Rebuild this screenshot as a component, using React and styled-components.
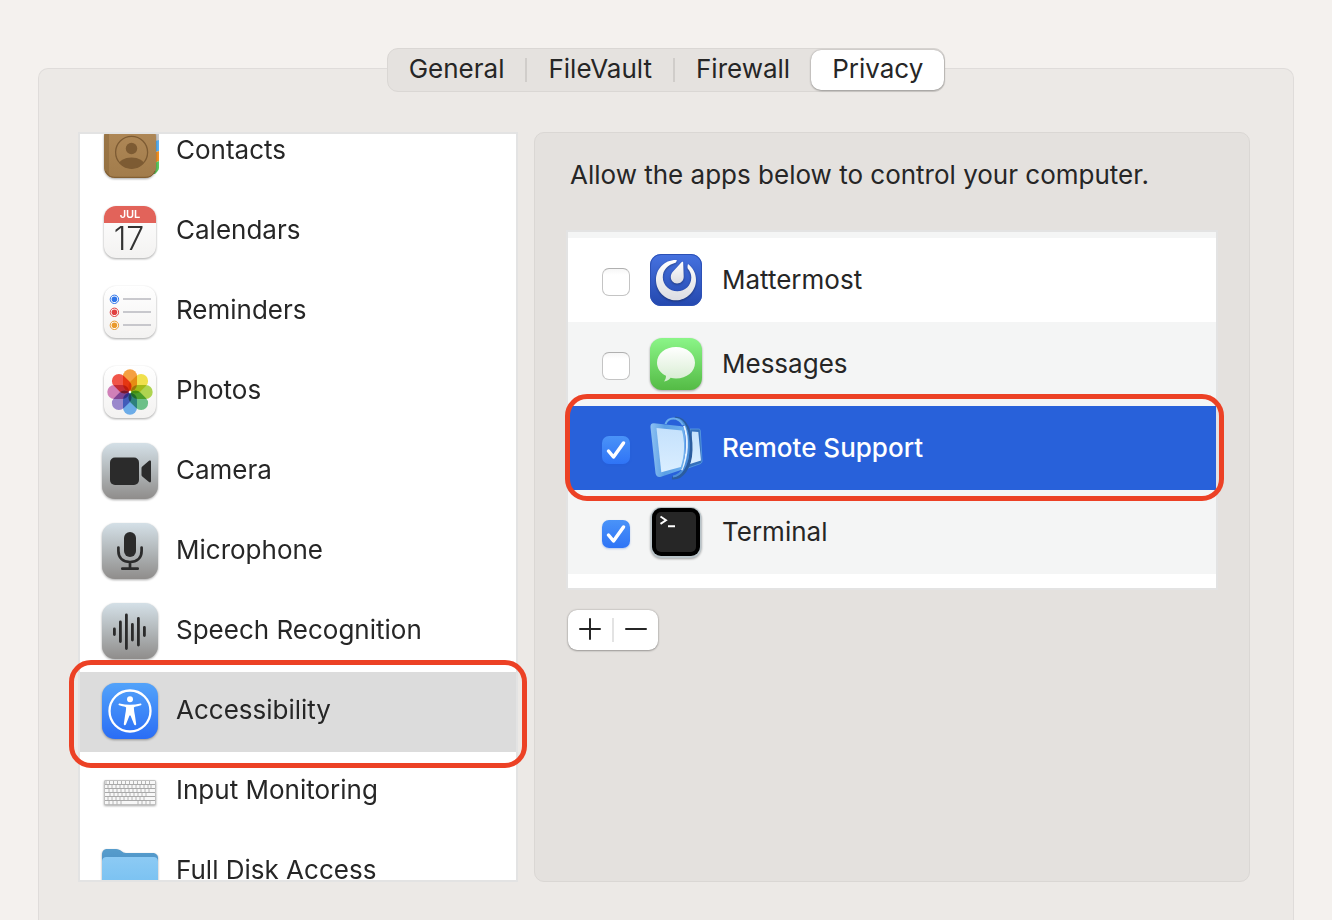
import React, { useLayoutEffect, useRef, useState } from "react";
import styled, { createGlobalStyle } from "styled-components";

const GlobalStyle = createGlobalStyle`
  *, *::before, *::after { box-sizing: border-box; }
  body {
    margin: 0;
    background: #f4f1ee;
    color: #262626;
    font-family: Inter, "Liberation Sans", sans-serif;
    font-size: 26px;
    line-height: 32px;
  }
  button, input { font: inherit; color: inherit; margin: 0; }
`;

const Page = styled.main`
  display: flex;
  flex-direction: column;
  min-height: 100vh;
  padding: 48px 38px 0;
`;

const TabBar = styled.div`
  display: flex;
  align-self: center;
  z-index: 1;
  height: 44px;
  margin-bottom: -24px;
  padding: 1px 0;
  border: 1px solid #dad7d4;
  border-radius: 11px;
  background: #e5e2df;
`;

const Tab = styled.button`
  display: flex;
  align-items: center;
  height: 40px;
  padding: 0 21px 2px;
  border: 0;
  border-radius: 10px;
  background: ${(p) => (p.$active ? "#ffffff" : "transparent")};
  box-shadow: ${(p) => (p.$active ? "0 0 2px rgba(0,0,0,.3), 0 1px 2px rgba(0,0,0,.25)" : "none")};
`;

const TabDivider = styled.span`
  align-self: center;
  width: 2px;
  height: 24px;
  background: #d0cdca;
`;

const Frame = styled.section`
  flex: 1;
  padding: 63px 43px 38px 39px;
  border: 1px solid #dfdcda;
  border-bottom: 0;
  border-radius: 10px 10px 0 0;
  background: #ece9e6;
`;

const Columns = styled.div`
  display: grid;
  grid-template-columns: minmax(300px, 440px) minmax(480px, 1fr);
  gap: 16px;
  height: calc(100vh - 170px);
  min-height: 640px;
`;

const Sidebar = styled.div`
  position: relative;
  min-height: 0;
`;

const CategoryList = styled.nav`
  height: 100%;
  overflow-y: auto;
  scrollbar-width: none;
  border: 2px solid #e3e3e3;
  background: #ffffff;
`;

const Category = styled.button`
  display: flex;
  align-items: center;
  gap: 18px;
  width: 100%;
  height: 80px;
  padding: 0 22px 2px;
  border: 0;
  background: ${(p) => (p.$active ? "#dcdcdc" : "transparent")};
  text-align: left;
`;

const CategoryLabel = styled.span`
  padding-bottom: 2px;
`;

const Ring = styled.span`
  position: absolute;
  z-index: 1;
  border: 5px solid #ec4125;
  border-radius: 22px;
  pointer-events: none;
`;

const CategoryRing = styled(Ring)`
  top: 528px;
  left: -9px;
  right: -9px;
  height: 108px;
`;

const AppRing = styled(Ring)`
  inset: -12px -8px -11px -3px;
`;

const Panel = styled.section`
  padding: 26px 31px;
  border: 1px solid #dad7d4;
  border-radius: 10px;
  background: #e4e1de;
`;

const Intro = styled.p`
  margin: 0 0 39px;
  padding-left: 4px;
`;

const AppList = styled.ul`
  margin: 0 0 20px;
  padding: 6px 0 14px;
  border: 2px solid #e3e3e3;
  background: linear-gradient(#f4f5f5 6px, #ffffff 6px);
  list-style: none;
`;

const AppRow = styled.li`
  position: relative;
  background: ${(p) => (p.$active ? "#2861da" : p.$shaded ? "#f4f5f5" : "#ffffff")};
  box-shadow: ${(p) => (p.$active ? "0 -12px #f4f5f5" : "none")};
  color: ${(p) => (p.$active ? "#ffffff" : "inherit")};
  font-weight: ${(p) => (p.$active ? 500 : 400)};
`;

const AppLabel = styled.label`
  display: flex;
  align-items: center;
  gap: 20px;
  height: 84px;
  padding: 0 34px;
`;

const CheckCell = styled.span`
  display: grid;
  padding-top: 4px;
  > * { grid-area: 1 / 1; }
`;

const CheckBox = styled.input`
  appearance: none;
  width: 28px;
  height: 28px;
  border: 1px solid #c4c4c4;
  border-top-color: #b0b0b0;
  border-radius: 7px;
  background: linear-gradient(#f6f6f6, #ffffff 6px);
  &:checked {
    border: 0;
    background: linear-gradient(#4a93f8, #2f74f6);
    box-shadow: 0 1px 2px rgba(30, 90, 220, 0.3);
  }
`;

const CheckMark = styled.svg`
  width: 28px;
  height: 28px;
  pointer-events: none;
`;

const AppIcon = styled.svg`
  position: relative;
  width: 52px;
  height: 52px;
  overflow: visible;
`;

const CategoryIcon = styled.svg`
  flex: none;
  width: 56px;
  height: 56px;
  overflow: visible;
`;

const AddRemove = styled.div`
  display: inline-flex;
  align-items: center;
  height: 40px;
  margin-left: 2px;
  border-radius: 9px;
  background: #ffffff;
  box-shadow: 0 0 2px rgba(0, 0, 0, 0.3), 0 1px 2px rgba(0, 0, 0, 0.25);
`;

const StepButton = styled.button`
  display: flex;
  align-items: center;
  justify-content: center;
  width: 44px;
  height: 40px;
  padding: 0 0 2px;
  border: 0;
  background: transparent;
`;

const StepDivider = styled.span`
  width: 2px;
  height: 24px;
  background: #e3e3e3;
`;

const Shaded = styled.g`
  filter: drop-shadow(0 1px 1px rgba(0, 0, 0, 0.35));
`;

const Petals = styled.g`
  isolation: isolate;
  rect { mix-blend-mode: multiply; }
`;

function Gradient({ id, from, to }) {
  return (
    <linearGradient id={id} x1="0" y1="0" x2="0" y2="1">
      <stop offset="0" stopColor={from} />
      <stop offset="1" stopColor={to} />
    </linearGradient>
  );
}

function Tile({ id, from, to }) {
  return (
    <Shaded>
      <defs><Gradient id={id} from={from} to={to} /></defs>
      <rect width="56" height="56" rx="13" fill={`url(#${id})`} />
    </Shaded>
  );
}

function WhiteTile({ id }) {
  return (
    <Shaded>
      <defs><Gradient id={id} from="#ffffff" to="#f3f2f1" /></defs>
      <rect x="2" y="3" width="52" height="52" rx="12" fill={`url(#${id})`} />
    </Shaded>
  );
}

function ContactsArt() {
  return (
    <>
      <defs>
        <Gradient id="book" from="#b08958" to="#a27c4b" />
        <clipPath id="badge"><circle cx="29.600" cy="29.300" r="16" /></clipPath>
      </defs>
      <rect x="44" y="6" width="13" height="15" rx="3" fill="#c9c9c9" />
      <path d="M50 19l7-2v11l-7 2Z" fill="#58aef0" />
      <path d="M50 30l7-2v10l-7 3Z" fill="#ef8f25" />
      <path d="M50 41l7-3v7c0 2-2 4-4 6h-3Z" fill="#5cc75e" />
      <Shaded><rect x="2" y="3" width="52" height="52" rx="11" fill="url(#book)" /></Shaded>
      <path d="M7 4v46c0 1.500.5 2.500 1.500 4C4 52 2 48 2 44V14C2 9 4 6 7 4Z" fill="#8b673b" opacity=".55" />
      <path d="M3.500 48c2 4.500 5 6.300 9.500 6.300h30c5 0 8-1.800 10-6.300" fill="none" stroke="#7c592e" strokeWidth="1" />
      <circle cx="29.600" cy="29.300" r="16" fill="none" stroke="#7d5b33" strokeWidth="1.300" />
      <circle cx="29.500" cy="25.500" r="5.700" fill="#7d5b33" />
      <ellipse cx="29.500" cy="42" rx="13" ry="7.500" fill="#7d5b33" clipPath="url(#badge)" />
    </>
  );
}

function CalendarArt() {
  return (
    <>
      <WhiteTile id="calendar" />
      <path d="M2 20v-5A12 12 0 0 1 14 3h28a12 12 0 0 1 12 12v5Z" fill="#e2635a" />
      <text x="28" y="15" textAnchor="middle" fontSize="11" fontWeight="600" fill="#ffffff">JUL</text>
      <text x="27" y="47" textAnchor="middle" fontSize="32" fontWeight="300" fill="#333333">17</text>
    </>
  );
}

function RemindersArt() {
  return (
    <>
      <WhiteTile id="reminders" />
      {["#2f75e8", "#e04040", "#e99a2c"].map((color, i) => (
        <g key={color} transform={`translate(0 ${i * 13})`}>
          <circle cx="12.400" cy="16.300" r="4.200" fill="#ffffff" stroke={color} strokeWidth="1" />
          <circle cx="12.400" cy="16.300" r="2.800" fill={color} />
          <path d="M21 16h28" stroke="#bcbcc2" strokeWidth="1.600" />
        </g>
      ))}
    </>
  );
}

const petals = ["#f5a040", "#f0e04c", "#aed450", "#6cc088", "#6cacE8", "#9a88cc", "#d080b8", "#f05548"];

function PhotosArt() {
  return (
    <>
      <WhiteTile id="photos" />
      <Petals>
        {petals.map((color, i) => (
          <rect
            key={color}
            x="21" y="6.300" width="14" height="22" rx="7"
            fill={color}
            transform={`rotate(${i * 45} 28 29)`}
          />
        ))}
      </Petals>
      <circle cx="28" cy="29" r="1.200" fill="#ffffff" />
    </>
  );
}

function CameraArt() {
  return (
    <>
      <Tile id="camera" from="#d4e0e7" to="#8f8d8b" />
      <rect x="8" y="14.500" width="29" height="27.500" rx="5" fill="#2b2b2b" />
      <path d="M39.500 25c0-.7.200-1.100.8-1.600l6.700-5.600c1-.8 2-.4 2 .9v19.400c0 1.300-1 1.700-2 .9l-6.700-5.600c-.6-.5-.8-.9-.8-1.600Z" fill="#2b2b2b" />
    </>
  );
}

function MicrophoneArt() {
  return (
    <>
      <Tile id="microphone" from="#d4e0e7" to="#8f8d8b" />
      <rect x="22" y="9" width="12" height="25" rx="6" fill="#2b2b2b" />
      <path d="M16.400 24.500V28c0 7 4.600 11 11.600 11s11.600-4 11.600-11v-3.500M28 39v6.500M20.300 45.700h15.400" fill="none" stroke="#2b2b2b" strokeWidth="2.700" strokeLinecap="round" />
    </>
  );
}

function SpeechArt() {
  return (
    <>
      <Tile id="speech" from="#d4e0e7" to="#8f8d8b" />
      <path d="M12.400 26v5.500M18.400 19v19.500M24.400 12v33.500M30.400 21.500V37M36.400 15.500v26.500M42.400 24.500v8" stroke="#2b2b2b" strokeWidth="2.800" strokeLinecap="round" />
    </>
  );
}

function AccessibilityArt() {
  return (
    <>
      <Tile id="accessibility" from="#53a3fa" to="#2a6df5" />
      <circle cx="28" cy="28" r="20.500" fill="none" stroke="#ffffff" strokeWidth="2.300" />
      <circle cx="28" cy="16.300" r="3" fill="#ffffff" />
      <path d="M17.500 20.400c3.500.9 7 1.300 10.500 1.300s7-.4 10.500-1.300c1.100-.2 1.300 1.500.3 1.900-2 .8-4.500 1.300-6.300 1.600-.6.200-.7.500-.6 1.200.2 2.800.5 4.500 1 7.200l1.300 8.600c.1 1.400-1.700 1.700-2.200.4L28.500 32.500h-1L24 41.300c-.5 1.300-2.300 1-2.200-.4l1.300-8.600c.5-2.700.8-4.400 1-7.200.1-.7 0-1-.6-1.200-1.800-.3-4.300-.8-6.300-1.600-1-.4-.8-2.100.3-1.900Z" fill="#ffffff" />
    </>
  );
}

const keyRows = [
  [4, 7.5, 11.500, 15.500, 19.500, 23.500, 27.500, 31.500, 35.500, 39.500, 43.500, 47.500],
  [6, 10, 14, 18, 22, 26, 30, 34, 38, 42, 46, 49],
  [7, 11, 15, 19, 23, 27, 31, 35, 39, 43, 47],
  [8, 12, 16, 20, 24, 28, 32, 36, 40, 44],
  [6, 10, 14, 18, 22, 26, 30, 34, 38, 42],
  [7, 11, 15, 19, 36, 40, 44, 48],
];

function KeyboardArt() {
  return (
    <>
      <Shaded><rect x="2" y="17" width="52" height="25" rx="1.500" fill="#c0c0c0" /></Shaded>
      <rect x="3" y="18" width="50" height="23" fill="#f7f7f7" />
      <path d="M3 21.500h50M3 25.500h50M3 29.500h50M3 33.500h50M3 37.500h50" stroke="#a9a9a9" strokeWidth="1" />
      {keyRows.map((keys, row) => (
        <path key={row} d={keys.map((x) => `M${x} ${18 + row * 4}v3.500`).join("")} stroke="#ababab" strokeWidth=".9" />
      ))}
    </>
  );
}

function FolderArt() {
  return (
    <>
      <defs>
        <Gradient id="folderBack" from="#579dcc" to="#3d7fc0" />
        <Gradient id="folderFront" from="#8ccaf4" to="#70bdf0" />
      </defs>
      <Shaded><path d="M0 12c0-4 2-6 5-6h9c5 0 6 4 10 4h26c4 0 6 2 6 5v35H0Z" fill="url(#folderBack)" /></Shaded>
      <path d="M0 19c0-4 2-5 5-5h46c3 0 5 1 5 5v31c0 3-2 5-5 5H5c-3 0-5-2-5-5Z" fill="url(#folderFront)" />
    </>
  );
}

function MattermostArt() {
  return (
    <>
      <defs>
        <Gradient id="mattermost" from="#4672e0" to="#2448ae" />
        <Gradient id="silver" from="#ffffff" to="#dcdde2" />
      </defs>
      <rect width="52" height="52" rx="11" fill="url(#mattermost)" />
      <rect x=".5" y=".5" width="51" height="51" rx="10.500" fill="none" stroke="#2c50b5" />
      <Shaded fill="url(#silver)">
        <path d="M26.800 6C14.500 5.500 6 15 6 26c0 11 9 20.300 20 20.300S46 37 46 26c0-6.500-3-12.300-8-16-.5 1.800-.6 3-.3 4.500C40 17 41.300 20 41.300 23.500c0 8-6.300 13.800-14 13.800s-14.500-6-14.500-14c0-7.500 5-12.500 12.700-14.500.8-.8 1.200-1.600 1.300-2.800Z" />
        <path d="M32.400 7.800c.6 0 .8.500.8 1.200l.5 13.800c0 4-3 6.700-6.600 6.700s-6.300-3-6.300-6.500c0-2 .8-3.600 1.800-5l8.700-9.500c.4-.4.700-.7 1.100-.7Z" />
      </Shaded>
    </>
  );
}

function MessagesArt() {
  return (
    <>
      <defs>
        <Gradient id="messages" from="#8bf588" to="#54bb45" />
        <Gradient id="bubble" from="#ffffff" to="#d6ecd0" />
      </defs>
      <Shaded><rect width="52" height="52" rx="12" fill="url(#messages)" /></Shaded>
      <path d="M26 9c10.800 0 19 6.800 19 15.700S36.800 40.400 26 40.400c-2 0-3.800-.2-5.400-.6-1.600 2-3.600 3.500-6.600 3.700 1.300-1.500 2-3.300 2-5.700C10.500 35 7 30.500 7 24.700 7 15.800 15.200 9 26 9Z" fill="url(#bubble)" />
    </>
  );
}

function RemoteSupportArt() {
  return (
    <>
      <defs>
        <linearGradient id="screenEdge" x1="0" y1="0" x2="1" y2="0">
          <stop offset="0" stopColor="#8cc0f2" />
          <stop offset=".4" stopColor="#5b9fe5" />
          <stop offset="1" stopColor="#6fb0ee" />
        </linearGradient>
        <Gradient id="screen" from="#c4e1fc" to="#daeeff" />
      </defs>
      <path d="M40 7h8.500c1.200 0 1.700.6 1.800 1.700L52 39c0 1.500-.6 2.300-2 2.800L38 46Z" fill="#3470bb" stroke="#5b9fe5" strokeWidth=".8" />
      <path d="M42 9.500l6.300.5 2.700 28.500-11 3.500Z" fill="url(#screen)" />
      <path d="M25-4C36-4 41.500 10 41 28S32 57 22 56" fill="none" stroke="#2b5c9e" strokeWidth="3" />
      <path d="M26-3C35-3 39 11 38.500 27S31 54 23 54.500" fill="none" stroke="#4c8fd8" strokeWidth="2.200" />
      <path d="M15.500 2C18-5 28-6 33 3" fill="none" stroke="#6caeec" strokeWidth="2" />
      <path d="M34 4c4.500 12 4 30-2.500 44" fill="none" stroke="#e4f2ff" strokeWidth="2" />
      <path d="M4 1.200l27.500 3c1.500.2 2.200.8 2.500 2.500 2.500 12 2 27-1.500 38.500-.5 2-1.300 2.700-3 3.300L11 54.700c-3 .8-5-.5-5.500-3.500L.5 5.500C.2 2.500 1.500 1 4 1.200Z" fill="url(#screenEdge)" />
      <path d="M6.500 6L32 8.500c3 11 2.800 25-1.200 36.500L11.300 50.300Z" fill="url(#screen)" />
    </>
  );
}

function TerminalArt() {
  return (
    <>
      <Shaded><rect x=".5" y="1" width="51" height="51" rx="11" fill="#b9c4c9" /></Shaded>
      <rect x="2" y="2" width="48" height="48" rx="9" fill="#000000" />
      <rect x="6" y="6" width="40" height="40" rx="5" fill="#262626" />
      <path d="M10.500 10.500l5.500 3.700-5.500 3.700M18 20.300h7" fill="none" stroke="#ffffff" strokeWidth="1.900" />
    </>
  );
}

const categories = [
  { name: "Contacts", Art: ContactsArt },
  { name: "Calendars", Art: CalendarArt },
  { name: "Reminders", Art: RemindersArt },
  { name: "Photos", Art: PhotosArt },
  { name: "Camera", Art: CameraArt },
  { name: "Microphone", Art: MicrophoneArt },
  { name: "Speech Recognition", Art: SpeechArt },
  { name: "Accessibility", Art: AccessibilityArt },
  { name: "Input Monitoring", Art: KeyboardArt },
  { name: "Full Disk Access", Art: FolderArt },
];

const apps = [
  { name: "Mattermost", Art: MattermostArt, allowed: false },
  { name: "Messages", Art: MessagesArt, allowed: false },
  { name: "Remote Support", Art: RemoteSupportArt, allowed: true, selected: true },
  { name: "Terminal", Art: TerminalArt, allowed: true },
];

const tabs = ["General", "FileVault", "Firewall", "Privacy"];

export default function App() {
  const listRef = useRef(null);
  const [allowed, setAllowed] = useState(() => apps.map((app) => app.allowed));

  useLayoutEffect(() => {
    listRef.current.scrollTop = 22;
  }, []);

  const toggle = (index) =>
    setAllowed((values) => values.map((value, i) => (i === index ? !value : value)));

  return (
    <>
      <GlobalStyle />
      <Page>
        <TabBar role="tablist">
          {tabs.map((name, i) => (
            <React.Fragment key={name}>
              {(i === 1 || i === 2) && <TabDivider />}
              <Tab type="button" role="tab" aria-selected={i === 3} $active={i === 3}>{name}</Tab>
            </React.Fragment>
          ))}
        </TabBar>
        <Frame>
          <Columns>
            <Sidebar>
              <CategoryList ref={listRef}>
                {categories.map(({ name, Art }) => (
                  <Category key={name} type="button" $active={name === "Accessibility"}>
                    <CategoryIcon viewBox="0 0 56 56" aria-hidden="true"><Art /></CategoryIcon>
                    <CategoryLabel>{name}</CategoryLabel>
                  </Category>
                ))}
              </CategoryList>
              <CategoryRing />
            </Sidebar>
            <Panel>
              <Intro>Allow the apps below to control your computer.</Intro>
              <AppList>
                {apps.map(({ name, Art, selected }, i) => (
                  <AppRow key={name} $active={selected} $shaded={i % 2 === 1}>
                    <AppLabel>
                      <CheckCell>
                        <CheckBox type="checkbox" checked={allowed[i]} onChange={() => toggle(i)} />
                        {allowed[i] && (
                          <CheckMark viewBox="0 0 28 28" aria-hidden="true">
                            <path d="M6.500 15l5 6L21.500 7" fill="none" stroke="#ffffff" strokeWidth="3.500" strokeLinecap="round" strokeLinejoin="round" />
                          </CheckMark>
                        )}
                      </CheckCell>
                      <AppIcon viewBox="0 0 52 52" aria-hidden="true"><Art /></AppIcon>
                      <span>{name}</span>
                    </AppLabel>
                    {selected && <AppRing />}
                  </AppRow>
                ))}
              </AppList>
              <AddRemove>
                <StepButton type="button" aria-label="Add">
                  <svg width="22" height="22" viewBox="0 0 22 22" aria-hidden="true">
                    <path d="M1 11h20M11 1v20" stroke="#262626" strokeWidth="2" strokeLinecap="round" />
                  </svg>
                </StepButton>
                <StepDivider />
                <StepButton type="button" aria-label="Remove">
                  <svg width="22" height="22" viewBox="0 0 22 22" aria-hidden="true">
                    <path d="M1 11h20" stroke="#262626" strokeWidth="2" strokeLinecap="round" />
                  </svg>
                </StepButton>
              </AddRemove>
            </Panel>
          </Columns>
        </Frame>
      </Page>
    </>
  );
}
